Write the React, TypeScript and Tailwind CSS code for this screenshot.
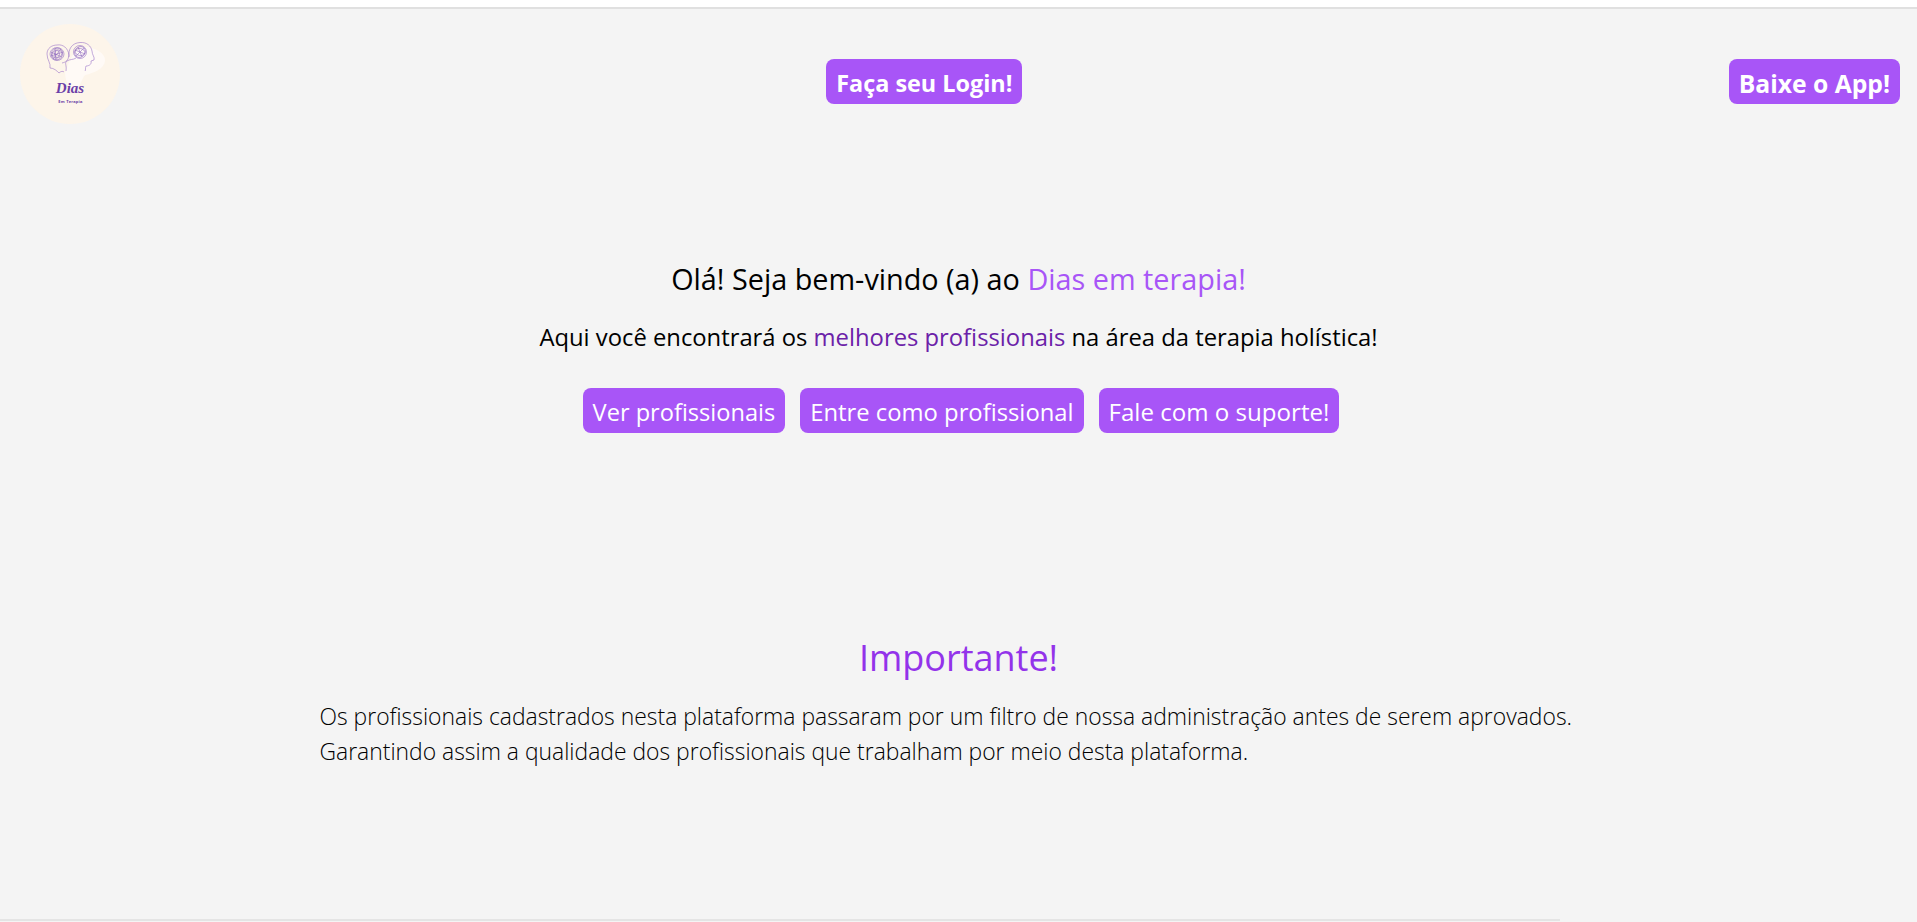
const font = "font-['Open_Sans','Noto_Sans',sans-serif]";

function Logo() {
    return (
        <svg viewBox="0 0 100 100" className="w-[100px] h-[100px] shrink-0">
            <circle cx="50" cy="50" r="50" fill="#fdf5ea" />
            <path d="M45 49 C50 36 54 24 64 23 C74 23 86 29 85 37 C84 45 74 49 65 51 C61 56 60 64 55 66 C50 66 46 60 45 49Z" fill="#fffaf6" />
            <path d="M30 44 C31 39 27 36 27 30 C27 24 32 21 37 21 C43 20 48 24 49 31 M30 44 C34 44 37 47 39 49 C41 47 43 47 44 48 M49 31 C48 37 46 38 42 39" fill="none" stroke="#9a74c8" strokeWidth="0.6" />
            <path d="M49 33 C48 25 52 19 60 18.500 C67 18 71 22 72 27 C72 31 75 33 74 36 L71 37 C72 41 68 42 66 42 C65 44 66 46 65 47 M46 47 C47 41 44 39 47 37 C50 35 53 36 56 34" fill="none" stroke="#9a74c8" strokeWidth="0.6" />
            <g fill="none" stroke="#8a63bd" strokeWidth="0.55">
                <ellipse cx="37" cy="30" rx="7" ry="6.500" />
                <ellipse cx="37" cy="30" rx="5.500" ry="6" transform="rotate(30 37 30)" />
                <ellipse cx="37" cy="30" rx="4" ry="5" transform="rotate(70 37 30)" />
                <ellipse cx="37" cy="30" rx="2.500" ry="3.500" />
                <path d="M31 28 L42 33 M33 35 L41 25 M35 24 L36 36 M31 32 L43 28" />
                <circle cx="60" cy="28" r="6.500" />
                <ellipse cx="60" cy="28" rx="5" ry="5.800" transform="rotate(40 60 28)" />
                <ellipse cx="60" cy="28" rx="3.500" ry="5" transform="rotate(100 60 28)" />
                <path d="M55 26 L65 30 M56 32 L64 24 M58 23 L62 33" />
            </g>
            <text x="50" y="69" textAnchor="middle" fontSize="15" fontStyle="italic" fontWeight="700" fill="#6b3fa8" fontFamily="Liberation Serif, serif">Dias</text>
            <text x="50.500" y="79" textAnchor="middle" fontSize="4" fontWeight="700" letterSpacing="0.2" fill="#6b3fa8" fontFamily="Open Sans, sans-serif">Em Terapia</text>
        </svg>
    )
}

function PurpleButton({ label, className = '' }: { label: string; className?: string }) {
    return (
        <button className={`h-[45px] px-2.5 pt-1 rounded-lg bg-[#a855f7] text-white whitespace-nowrap ${className}`}>
            {label}
        </button>
    )
}

export default function App() {
    return (
        <div className={`min-h-[922px] flex flex-col bg-[#f4f4f4] ${font}`}>
            <div className="h-[9px] bg-white border-b-2 border-[#e0e0e0]" />

            <header className="flex items-start justify-between pl-5 pr-[17px] pt-[15px]">
                <Logo />
                <PurpleButton label="Faça seu Login!" className="font-bold mt-[35px] text-[23.4px]" />
                <PurpleButton label="Baixe o App!" className="font-bold mt-[35px] text-[24.7px]" />
            </header>

            <section className="flex flex-col items-center mt-[137px]">
                <h1 className="text-[28.8px] leading-9 text-black">
                    Olá! Seja bem-vindo (a) ao <span className="text-[#a855f7]">Dias em terapia!</span>
                </h1>
                <p className="mt-[26px] text-[23.8px] leading-7 text-black">
                    Aqui você encontrará os <span className="text-[#6b21a8]">melhores profissionais</span> na área da terapia holística!
                </p>
                <div className="flex gap-[15px] mt-[37px] ml-[5px]">
                    <PurpleButton label="Ver profissionais" className="text-[23.6px]" />
                    <PurpleButton label="Entre como profissional" className="text-[23.8px]" />
                    <PurpleButton label="Fale com o suporte!" className="text-[24.1px]" />
                </div>
            </section>

            <section className="flex flex-col items-center mt-[205px]">
                <h2 className="text-[36px] leading-10 text-[#9333ea]">Importante!</h2>
                <p className="mt-[21px] w-[1278px] text-[22.9px] leading-[35px] font-light text-black">
                    Os profissionais cadastrados nesta plataforma passaram por um filtro de nossa administração antes de serem aprovados.
                    <br />
                    Garantindo assim a qualidade dos profissionais que trabalham por meio desta plataforma.
                </p>
            </section>

            <div className="mt-auto mb-px h-0.5 w-[1560px] bg-[#e4e4e4]" />
        </div>
    )
}
